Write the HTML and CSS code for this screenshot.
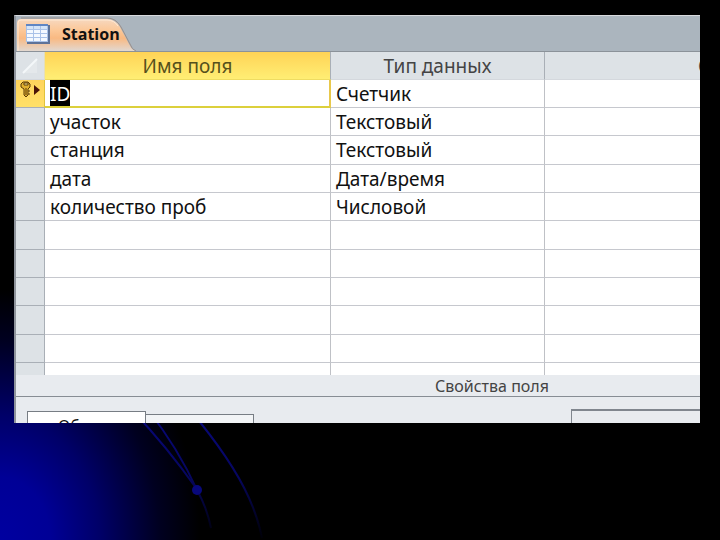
FILE: index.html
```html
<!DOCTYPE html>
<html lang="ru">
<head>
    <meta charset="UTF-8">
    <meta name="viewport" content="width=device-width, initial-scale=1.0">
    <title>Station</title>
    <link rel="stylesheet" href="styles.css">
</head>
<body>
    <svg class="rays" width="300" height="240" viewBox="0 0 300 240" fill="none" aria-hidden="true">
      <defs>
        <linearGradient id="fade" gradientUnits="userSpaceOnUse" x1="0" y1="100" x2="0" y2="238">
          <stop offset="0" stop-color="#080880"/>
          <stop offset="0.55" stop-color="#060660"/>
          <stop offset="1" stop-color="#000008"/>
        </linearGradient>
      </defs>
      <path d="M132 110 Q168 148 196 188" stroke="url(#fade)" stroke-width="2"/>
      <path d="M148 110 Q178 148 197 190 Q207 208 211 228" stroke="url(#fade)" stroke-width="2"/>
      <path d="M190 110 Q232 160 249 198 Q258 218 262 238" stroke="url(#fade)" stroke-width="2"/>
      <circle cx="197" cy="190" r="5" fill="#08087c"/>
    </svg>

    <main class="window">
      <div class="tabStrip">
        <button class="docTab" type="button">
          <svg class="tabShape" width="120" height="35" viewBox="0 0 120 35" aria-hidden="true">
            <defs>
              <linearGradient id="orange" x1="0" y1="0" x2="0" y2="1">
                <stop offset="0" stop-color="#f6d8c0"/>
                <stop offset="0.35" stop-color="#fcc898"/>
                <stop offset="0.6" stop-color="#f9b982"/>
                <stop offset="1" stop-color="#e2d8d0"/>
              </linearGradient>
            </defs>
            <path d="M1 35 V7 Q1 3 5 3 H91 Q99 3 104 11 L113 28 Q116 34 120 35 Z" fill="url(#orange)"/>
            <path d="M2 35 V7 Q2 4 5 4 H91 Q98 4 102 10" fill="none" stroke="#ffe9d4"/>
            <path d="M5 2 H91 Q100 2 105 11 L114 28 Q116 34 120 35" fill="none" stroke="#998f8b"/>
          </svg>
          <svg class="sheetIcon" width="24" height="20" viewBox="0 0 24 20" aria-hidden="true">
            <path d="M1 1 H24 V20 H1 Z" fill="#5e7398"/>
            <path d="M0 0 H22 V18 H0 Z" fill="#a9c2e8"/>
            <path d="M0 0 H22 V2 H0 Z" fill="#5f86c4"/>
            <path d="M1 6h6v3H1z M8 6h6v3H8z M15 6h6v3h-6z M1 10h6v3H1z M8 10h6v3H8z M15 10h6v3h-6z M1 14h6v3H1z M8 14h6v3H8z M15 14h6v3h-6z" fill="#f4f9ff"/>
            <path d="M1 2h6v3H1z M8 2h6v3H8z M15 2h6v3h-6z" fill="#d4e4f8"/>
          </svg>
          <span>Station</span>
        </button>
      </div>

      <table class="fields">
        <colgroup>
          <col class="colSelector">
          <col class="colName">
          <col class="colType">
          <col>
        </colgroup>
        <thead>
          <tr>
            <th class="corner">
              <svg width="16" height="16" viewBox="0 0 16 16" aria-hidden="true">
                <path d="M15 1 V15 H1 Z" fill="#e4e8eb"/>
                <path d="M1 15 L15 1" stroke="#f4f7f9" stroke-width="2"/>
              </svg>
            </th>
            <th class="active">Имя поля</th>
            <th>Тип данных</th>
            <th class="description">Описание</th>
          </tr>
        </thead>
        <tbody>
          <tr class="current">
            <th>
              <svg width="22" height="18" viewBox="0 0 22 18" aria-hidden="true">
                <path d="M4 2 H9 L11 4 V7 L9 9 V15 L7 17 L5 15 V9 L2 7 V4 Z" fill="#e0b030" stroke="#5a3a08" stroke-width="1"/>
                <path d="M5 3 H9 V5 H5 Z" fill="#fff0a0" stroke="#5a3a08" stroke-width="1"/>
                <path d="M7 8 V15 M9 11 H11 M9 14 H11" stroke="#5a3a08" stroke-width="1"/>
                <path d="M15 5 L21 10 L15 15 Z" fill="#4a1408"/>
              </svg>
            </th>
            <td><span class="selected">ID</span></td>
            <td>Счетчик</td>
            <td></td>
          </tr>
          <tr><th></th><td>участок</td><td>Текстовый</td><td></td></tr>
          <tr><th></th><td>станция</td><td>Текстовый</td><td></td></tr>
          <tr><th></th><td>дата</td><td>Дата/время</td><td></td></tr>
          <tr><th></th><td>количество проб</td><td>Числовой</td><td></td></tr>
          <tr><th></th><td></td><td></td><td></td></tr>
          <tr><th></th><td></td><td></td><td></td></tr>
          <tr><th></th><td></td><td></td><td></td></tr>
          <tr><th></th><td></td><td></td><td></td></tr>
          <tr><th></th><td></td><td></td><td></td></tr>
          <tr class="partial"><th></th><td></td><td></td><td></td></tr>
        </tbody>
      </table>

      <div class="propsTitle">Свойства поля</div>
      <div class="props">
        <button class="propTab open" type="button">Общие</button>
        <button class="propTab" type="button" aria-label="Подстановка"></button>
        <div class="hint"></div>
      </div>
    </main>
</body>
</html>
```
FILE: styles.css
```css
* {
  box-sizing: border-box;
}

body {
  margin: 0;
  min-height: 100vh;
  padding: 15px 20px 0 14px;
  font-family: 'Noto Sans', 'Open Sans', sans-serif;
  font-size: 19px;
  color: #111;
  background: #000 radial-gradient(ellipse 200px 250px at 0 100%, #0000a0 0%, #000096 25%, #000068 50%, #000020 80%, #000 100%) no-repeat;
}

/* light trails in the corner of the slide */
.rays {
  position: fixed;
  left: 0;
  bottom: 0;
}

.window {
  position: relative;
  overflow: hidden;
  border-left: 2px solid #8f949c;
  border-top: 1px solid #d8dade;
  background-color: #e8ebef;
}

.tabStrip {
  display: flex;
  height: 36px;
  background-color: #abb5be;
  border-bottom: 1px solid #8b9299;
}

button {
  font-family: inherit;
  color: inherit;
}

.docTab {
  position: relative;
  display: flex;
  align-items: center;
  gap: 12px;
  height: 35px;
  width: 120px;
  padding: 0 0 0 10px;
  border: none;
  background: none;
  font-family: 'Open Sans', sans-serif;
  font-size: 16px;
  font-weight: bold;
}

.docTab span, .sheetIcon {
  position: relative;
}

.tabShape {
  position: absolute;
  left: 0;
  top: 0;
}

.fields {
  width: 100%;
  table-layout: fixed;
  border-collapse: separate;
  border-spacing: 0;
}

.colSelector {
  width: 29px;
}

.colName {
  width: 286px;
}

.colType {
  width: 214px;
}

th, td {
  height: 28px;
  padding: 0 5px;
  line-height: 24px;
  border-right: 1px solid #bfc1c6;
  border-bottom: 1px solid #c6c8ce;
  white-space: nowrap;
  overflow: hidden;
}

td {
  background-color: #fff;
}

th {
  font-weight: normal;
  background-color: #dde2e6;
  border-color: #a9afb6;
}

thead th {
  color: #444;
  border-bottom-color: #d4d8dd;
}

th:last-child, td:last-child {
  border-right: none;
}

thead .active {
  color: #55501c;
  background: linear-gradient(#ffd356, #ffee74);
  border-bottom-color: #efdc62;
}

thead .description {
  padding-left: 153px;
  text-align: left;
}

.corner, tbody th {
  padding: 0;
}

thead .corner {
  border-right-color: #e6dfb8;
}

th svg {
  display: block;
  margin: 0 auto;
}

tbody tr:nth-child(3n) > * {
  height: 29px;
}

.current th {
  background: linear-gradient(#ffd45c, #ffe068);
  border-right-color: #e0c23c;
  vertical-align: top;
}

.current td:nth-child(2) {
  border-right: 2px solid #e8c84c;
  border-bottom: 2px solid #dcd03c;
}

.selected {
  display: inline-block;
  height: 26px;
  line-height: 28px;
  vertical-align: top;
  color: #fff;
  background-color: #000;
}

tbody .partial > * {
  height: 12px;
  border-bottom: none;
}

.propsTitle {
  padding-left: 268px;
  height: 22px;
  line-height: 22px;
  font-size: 16px;
  text-align: center;
  color: #444;
  border-bottom: 1px solid #878d94;
}

.props {
  display: flex;
  align-items: flex-end;
  height: 26px;
  padding-left: 11px;
  overflow: hidden;
}

.propTab {
  width: 108px;
  height: 9px;
  padding: 0;
  border: 1px solid #777d84;
  border-bottom: none;
  border-left: none;
  background-color: #f2f4f6;
  overflow: hidden;
}

.propTab.open {
  display: flex;
  width: 119px;
  height: 12px;
  padding: 4px 0 0 30px;
  border-left: 1px solid #777d84;
  font-size: 16px;
  line-height: 20px;
  background-color: #fff;
}

.hint {
  width: 129px;
  height: 14px;
  margin-left: auto;
  border-top: 2px solid #80868e;
  border-left: 1px solid #80868e;
}
```
